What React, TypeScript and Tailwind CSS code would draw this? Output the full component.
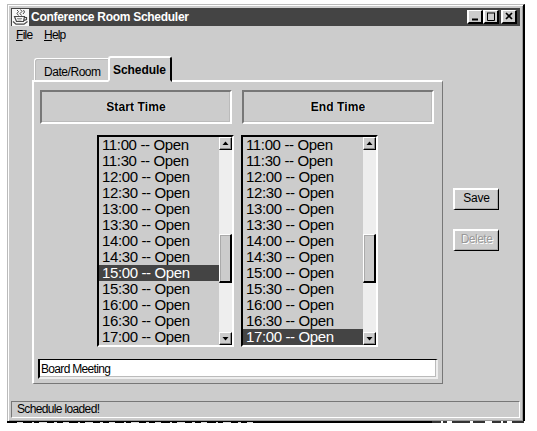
import React from 'react';

const times = ['11:00', '11:30', '12:00', '12:30', '13:00', '13:30', '14:00', '14:30', '15:00', '15:30', '16:00', '16:30', '17:00'];

function JavaCup() {
  return (
    <svg width="17" height="17" viewBox="0 0 17 17" className="shrink-0">
      <rect width="17" height="17" fill="#f8f8f8" />
      <g fill="none" stroke="#484848" strokeWidth="1.2">
        <path d="M5 1 6.5 2.5 5 4.5 6.5 6.5M8.5 .5 10 2.5 8 4.5 9.5 6.5M11.5 1 12.5 3 11 5" strokeWidth="1" />
        <path d="M2.5 7.5H12.5L11.5 12.5H4.5ZM12.5 8.5h2v2L12 11.5M1 12.5 4 15.2h8L15.5 12.5" />
        <path d="M5 9.5h5M5.5 11h4" stroke="#999" strokeWidth="1" />
      </g>
    </svg>
  );
}

function WindowButton({ children }: { children: React.ReactNode }) {
  return (
    <button className="h-[14px] w-[16px] border-t border-l-[2px] border-r-2 border-b-2 border-t-white border-l-white border-r-black border-b-black bg-[#ccc]">
      <svg width="12" height="11" viewBox="0 0 12 11" fill="none" stroke="#000">{children}</svg>
    </button>
  );
}

function Arrow({ down = false }: { down?: boolean }) {
  return (
    <button className="h-[13px] w-[13px] shrink-0 border-t border-l border-r border-b border-t-white border-l-white border-r-black border-b-black bg-[#ccc] shadow-[inset_-1px_-1px_0_#888]">
      <svg width="11" height="11" viewBox="0 0 11 11">
        <path d={down ? 'M2.5 4h6L5.5 7.5Z' : 'M2.5 7h6L5.5 3.5Z'} fill="#000" />
      </svg>
    </button>
  );
}

function Header({ title }: { title: string }) {
  return (
    <div className="flex h-[34px] w-[192px] items-center justify-center border-2 border-t-[#777] border-l-[#777] border-r-white border-b-white pb-px shadow-[inset_-1px_-1px_0_#bbb]">
      <span className="text-[12px] leading-[16px] font-bold tracking-[0.1px] [text-shadow:1px_0_#e4e4e4,-1px_0_#e4e4e4]">{title}</span>
    </div>
  );
}

function TimeList({ selected }: { selected: string }) {
  return (
    <div className="flex h-[212px] w-[137px] border-t-2 border-r-2 border-b-2 border-l-2 border-t-black border-l-black border-r-white border-b-white">
      <div className="min-w-0 flex-1">
        {times.map((t) => (
          <div key={t} className={`h-[16px] pl-[3px] text-[15px] leading-[16px] tracking-[-0.37px] whitespace-pre ${t === selected ? 'bg-[#444] text-white' : ''}`}>{t} -- Open</div>
        ))}
      </div>
      <div className="flex w-[13px] flex-col bg-[#eee]">
        <Arrow />
        <div className="mt-[84px] h-[49px] border-t border-l border-r-2 border-b-2 border-t-white border-l-white border-r-black border-b-black bg-[#ccc] shadow-[inset_1px_1px_0_#aaa]" />
        <div className="flex-1" />
        <Arrow down />
      </div>
    </div>
  );
}

const sideButton = 'h-[22px] w-[46px] border-t-2 border-l-2 border-r border-b border-t-white border-l-white border-r-black border-b-black text-center text-[12px] leading-[17px] pb-[2px] shadow-[inset_-1px_-1px_0_#aaa]';

export default function App() {
  return (
    <div className="h-[431px] w-[537px] overflow-hidden bg-white pt-[4px] pl-[7px] font-['Liberation_Sans',Arial,sans-serif] text-black">
      <div className="flex h-[417px] w-[518px] flex-col border-t border-l border-r-2 border-t-[#bbb] border-l-[#bbb] border-r-black bg-[#ccc] px-[3px] pt-[3px] pb-[3px] shadow-[inset_1px_1px_0_#fff,inset_-1px_-1px_0_#999]">
        <div className="flex h-[18px] w-[509px] shrink-0 items-center bg-[#444] pl-[1px]">
          <JavaCup />
          <span className="ml-[2px] text-[12px] leading-[18px] font-bold tracking-[-0.28px] whitespace-nowrap text-white">Conference Room Scheduler</span>
          <div className="mr-[3px] ml-auto flex">
            <WindowButton><path d="M3 8.5h6" strokeWidth="2" /></WindowButton>
            <WindowButton><path d="M2 2h8M2.5 2v7.5h7V2" /></WindowButton>
            <div className="w-[2px]" />
            <WindowButton><path d="m3 2 6 6M9 2 3 8" strokeWidth="1.7" /></WindowButton>
          </div>
        </div>
        <div className="flex h-[30px] shrink-0 gap-[12px] pt-[2px] pl-[5px] text-[12px] leading-[15px]">
          <span className="w-[16px] tracking-[-0.7px]"><u>F</u>ile</span>
          <span className="tracking-[-0.8px]"><u>H</u>elp</span>
        </div>
        <div className="flex">
          <div className="ml-[21px] w-[411px]">
            <div className="flex h-[24px] items-end pl-[2px]">
              <div className="h-[22px] w-[74px] rounded-tl-[3px] border-t border-l border-white pt-[5px] pl-[9px] text-[12px] leading-[17px] tracking-[-0.45px] shadow-[inset_1px_1px_0_#bbb]">Date/Room</div>
              <div className="relative z-10 -mb-[2px] h-[26px] w-[64px] rounded-t-[3px] border-t-2 border-r-2 border-b-2 border-l-2 border-t-white border-l-white border-r-black border-b-[#ccc] bg-[#ccc] pt-[4px] pl-[3px] text-[12px] leading-[17px] font-bold tracking-[-0.05px]">Schedule</div>
            </div>
            <div className="h-[304px] border-t-2 border-r border-b border-l-2 border-t-white border-l-white border-r-[#777] border-b-[#777] pt-[8px] pl-[6px]">
              <div className="flex gap-[10px]">
                <Header title="Start Time" />
                <Header title="End Time" />
              </div>
              <div className="mt-[11px] ml-[57px] flex gap-[7px]">
                <TimeList selected="15:00" />
                <TimeList selected="17:00" />
              </div>
              <div className="mt-[12px] -ml-[2px] h-[20px] w-[400px] border-t border-r-2 border-b-2 border-l-2 border-t-black border-l-black border-r-[#eee] border-b-[#eee] bg-white pl-[1px] text-[12px] leading-[18px] tracking-[-0.68px] shadow-[inset_-1px_-1px_0_#bbb]">Board Meeting</div>
            </div>
          </div>
          <div className="mt-[132px] ml-[10px] flex flex-col gap-[19px]">
            <button className={`${sideButton} tracking-[-0.2px]`}>Save</button>
            <button className={`${sideButton} tracking-[-0.5px] text-[#999] [text-shadow:1px_1px_#fff]`}>Delete</button>
          </div>
        </div>
        <div className="mt-auto h-[17px] w-[509px] shrink-0 border-t border-r border-b border-l border-t-[#777] border-l-[#777] border-r-white border-b-white pl-[5px] text-[12px] leading-[15px] tracking-[-0.65px]">Schedule loaded!</div>
      </div>
      <svg width="518" height="2" className="block">
        <path d="M0 1h425" stroke="#000" strokeWidth="2" />
        <path d="M10 1.5h245" stroke="#ddd" strokeDasharray="6 9 2 5 8 7 3 6" />
        <path d="M425 1h92" stroke="#333" strokeWidth="2" strokeDasharray="9 2 4 5 18 3 12 7" />
      </svg>
    </div>
  );
}
